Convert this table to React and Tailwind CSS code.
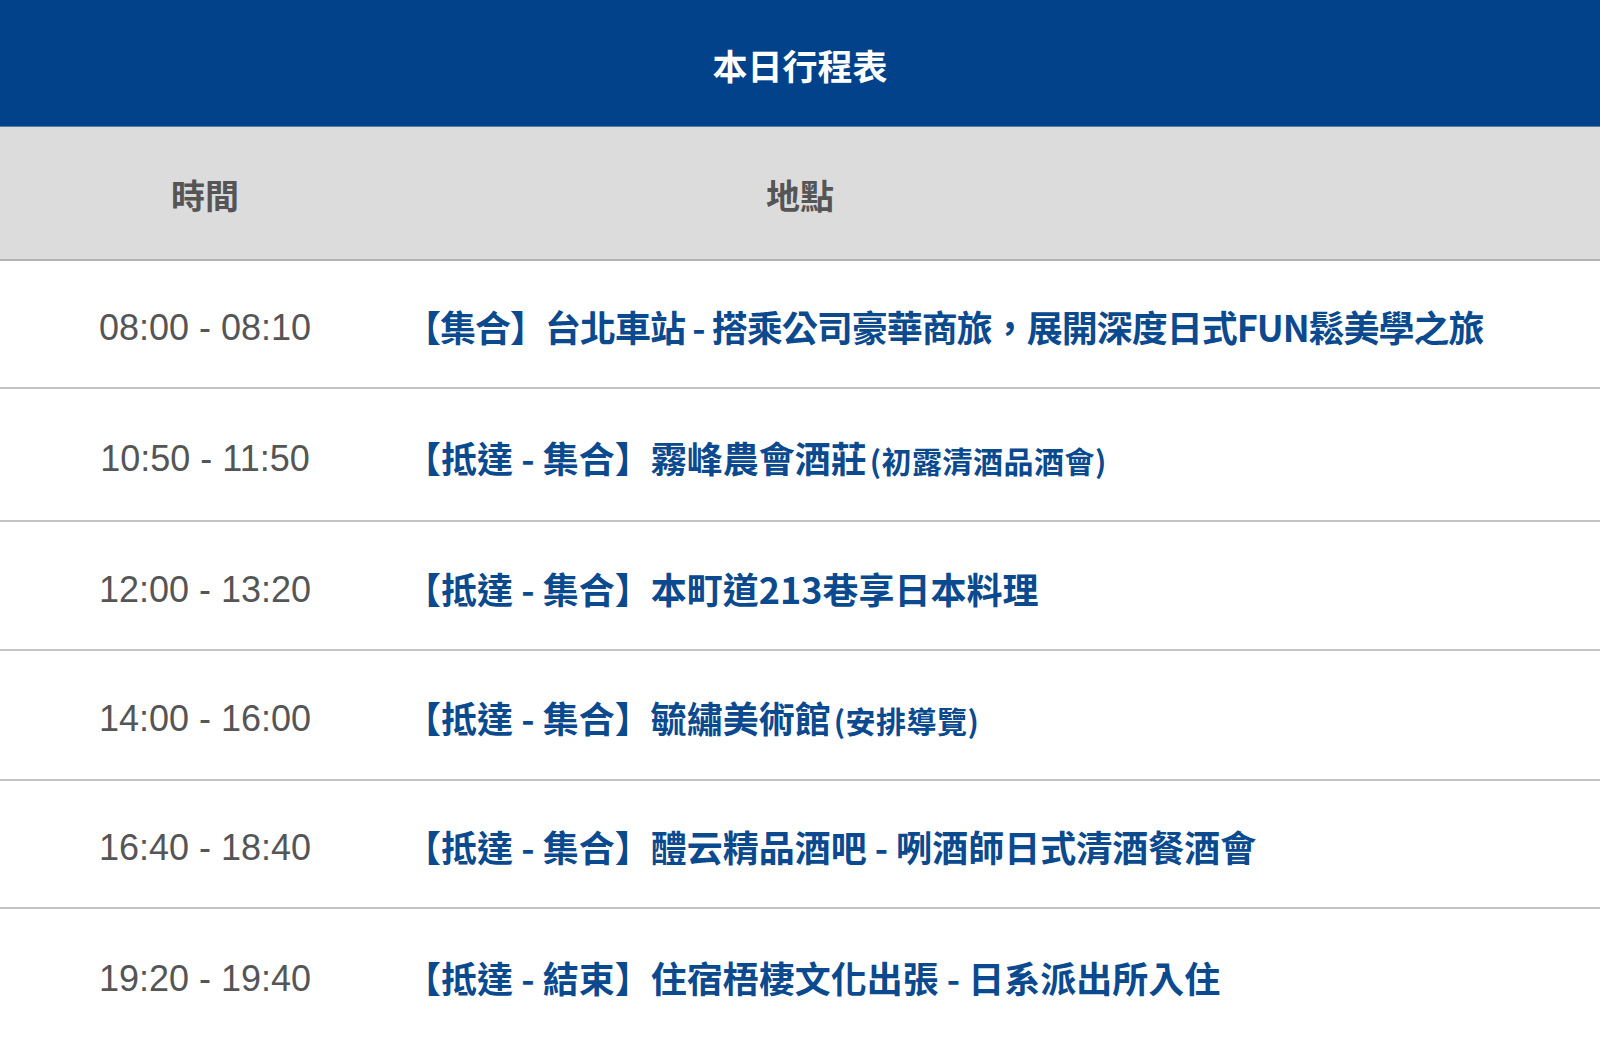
import React from "react";

const rows = [
  { time: "08:00 - 08:10", main: "【集合】台北車站 - 搭乘公司豪華商旅，展開深度日式FUN鬆美學之旅", sub: "", h: "h-[128px]", tight: true },
  { time: "10:50 - 11:50", main: "【抵達 - 集合】霧峰農會酒莊", sub: "(初露清酒品酒會)", h: "h-[133px]" },
  { time: "12:00 - 13:20", main: "【抵達 - 集合】本町道213巷享日本料理", sub: "", h: "h-[129px]" },
  { time: "14:00 - 16:00", main: "【抵達 - 集合】毓繡美術館", sub: "(安排導覽)", h: "h-[130px]" },
  { time: "16:40 - 18:40", main: "【抵達 - 集合】醴云精品酒吧 - 咧酒師日式清酒餐酒會", sub: "", h: "h-[128px]" },
  { time: "19:20 - 19:40", main: "【抵達 - 結束】住宿梧棲文化出張 - 日系派出所入住", sub: "", h: "h-[132px]" },
];

const cjk = { fontFamily: '"Noto Sans CJK TC", "Noto Sans", sans-serif' };
const latin = { fontFamily: '"Liberation Sans", Arial, sans-serif' };

export default function App() {
  return (
    <div className="w-[1600px] h-[1039px] overflow-hidden bg-white" style={cjk}>
      <div className="h-[127px] bg-[#02428a] border-b border-[#5d7c9e] flex items-center justify-center pt-[2px]">
        <h1 className="text-white font-bold text-[35px] leading-none">本日行程表</h1>
      </div>
      <div className="h-[134px] bg-[#dcdcdc] border-b-2 border-[#b3b3b3] flex items-center pt-[4px]">
        <div className="w-[410px] text-center text-[#555555] font-bold text-[34px] leading-none">時間</div>
        <div className="w-[780px] text-center text-[#555555] font-bold text-[34px] leading-none">地點</div>
      </div>
      {rows.map((r, i) => (
        <div
          key={i}
          className={`${r.h} flex items-center pt-[4px] ${i < rows.length - 1 ? "border-b-2 border-[#c4c4c4]" : ""}`}
        >
          <div className="w-[410px] pt-[4px] text-center text-[#555555] text-[36px] leading-none" style={latin}>
            {r.time}
          </div>
          <div
            className={`-ml-[5px] text-[#0b4a8e] font-bold text-[36px] leading-none whitespace-nowrap ${r.tight ? "tracking-[-1px]" : "tracking-[0px]"}`}
          >
            {r.main}
            {r.sub && <span className="ml-[3px] text-[30px] tracking-[0.5px]">{r.sub}</span>}
          </div>
        </div>
      ))}
    </div>
  );
}
